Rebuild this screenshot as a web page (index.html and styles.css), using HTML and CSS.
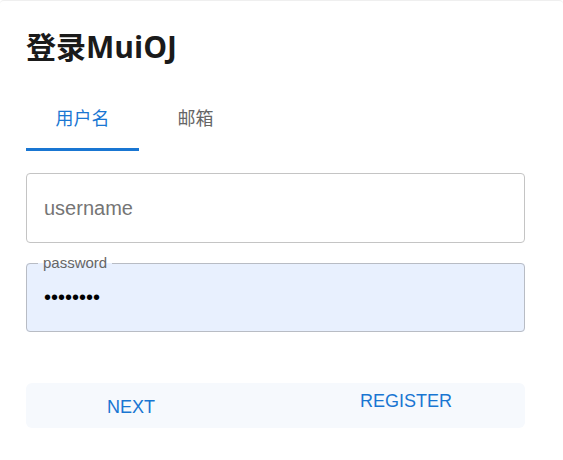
FILE: index.html
```html
<!DOCTYPE html>
<html lang="zh">
<head>
<meta charset="utf-8">
<title>登录MuiOJ</title>
<link rel="stylesheet" href="styles.css">
</head>
<body>
<div class="card">
  <h1 class="title">登录MuiOJ</h1>
  <div class="tabs">
    <div class="tab active">用户名</div>
    <div class="tab">邮箱</div>
  </div>
  <form class="form">
    <input class="field" type="text" placeholder="username">
    <fieldset class="field-set">
      <legend class="legend">password</legend>
      <input class="field-inner" type="password" value="12345678">
    </fieldset>
    <div class="actions">
      <button type="button" class="btn btn-next">NEXT</button>
      <button type="button" class="btn btn-register">REGISTER</button>
    </div>
  </form>
</div>
</body>
</html>
```

FILE: styles.css
```css
html, body {
  margin: 0;
  padding: 0;
  background: #ffffff;
}
body {
  font-family: "Liberation Sans", Arial, "Noto Sans CJK SC", sans-serif;
}
.card {
  border-top: 1px solid #efefef;
  border-radius: 4px 4px 0 0;
  padding: 0 38px 0 26px;
  height: 459px;
}
.title {
  margin: 0;
  padding-top: 24px;
  font-family: "Open Sans", "Noto Sans CJK SC", sans-serif;
  font-weight: 700;
  font-size: 30px;
  line-height: 44px;
  color: #1a1a1a;
}
.tabs {
  display: flex;
  margin-top: 36px;
}
.tab {
  width: 113px;
  text-align: center;
  font-family: "Noto Sans CJK SC", sans-serif;
  font-size: 18px;
  line-height: 24px;
  padding: 0 0 19px;
  color: #666666;
  border-bottom: 3px solid transparent;
}
.tab.active {
  color: #1976d2;
  border-bottom-color: #1976d2;
}
.form {
  display: flex;
  flex-direction: column;
  margin-top: 22px;
}
.field {
  box-sizing: border-box;
  height: 70px;
  width: 100%;
  border: 1px solid #c4c4c4;
  border-radius: 4px;
  padding: 0 17px;
  font-family: "Liberation Sans", Arial, sans-serif;
  font-size: 20px;
  color: #222;
  background: #fff;
  outline: none;
}
.field::placeholder {
  color: #757575;
}
.field-set {
  margin: 13px 0 0;
  padding: 0 17px;
  min-width: 0;
  border: 1px solid #b8bcc4;
  border-radius: 4px;
  background: #e8f0fe;
  height: 76px;
  box-sizing: border-box;
}
.legend {
  padding: 0 5px;
  margin-left: -6px;
  font-size: 15px;
  line-height: 14px;
  color: #666666;
}
.field-inner {
  border: none;
  background: transparent;
  outline: none;
  padding: 0;
  margin-top: 12px;
  width: 100%;
  height: 30px;
  font-family: "Liberation Sans", Arial, sans-serif;
  font-size: 20px;
  color: #000;
}
.actions {
  margin-top: 51px;
  height: 45px;
  background: #f6f9fd;
  border-radius: 6px;
  display: flex;
  justify-content: space-between;
}
.btn {
  border: none;
  background: transparent;
  font-family: "Liberation Sans", Arial, sans-serif;
  font-size: 18px;
  color: #1976d2;
  padding: 0;
  cursor: pointer;
}
.btn-next {
  width: 210px;
  height: 45px;
  line-height: 45px;
  padding-top: 2px;
}
.btn-register {
  width: 238px;
  height: 36px;
  line-height: 36px;
}
```
